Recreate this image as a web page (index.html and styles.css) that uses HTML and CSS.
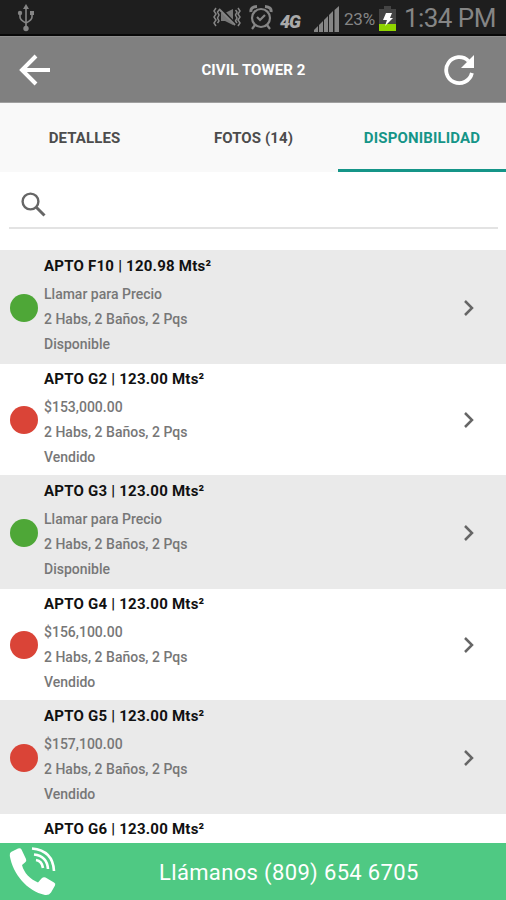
FILE: index.html
```html
<!DOCTYPE html>
<html lang="es">
<head>
<meta charset="utf-8">
<title>Civil Tower 2</title>
<link rel="stylesheet" href="styles.css">
</head>
<body>
<svg width="0" height="0" class="defs"><symbol id="chev" viewBox="0 0 12 18"><path d="M2 2l7 7-7 7" fill="none" stroke="#666" stroke-width="2.5"/></symbol></svg>
<div class="status">
  <svg class="usb" width="18" height="28" viewBox="0 0 18 28" fill="none" stroke="#858585" stroke-width="1.6"><path d="M9 4v20M3 10v3q0 3 6 6M15 10v3q0 3-6 6"/><path d="M9 0l3 5H6z" fill="#858585" stroke="none"/><circle cx="9" cy="24.5" r="2.7" fill="#858585" stroke="none"/><circle cx="3" cy="9" r="2.2" fill="#858585" stroke="none"/><path d="M13 7h4v4h-4z" fill="#858585" stroke="none"/></svg>
  <svg class="mute" width="28" height="20" viewBox="0 0 28 20" fill="none" stroke="#858585" stroke-width="1.5"><path d="M3 1L1 4l2 3-2 3 2 3-2 3 2 3M6 3L4.500 5l1.500 3-1.500 3 1.500 3-1.500 2M25 1l2 3-2 3 2 3-2 3 2 3-2 3M22.500 3l1.500 2-1.500 3 1.500 3-1.500 3 1.500 2"/><path d="M8 6h4l8-4v16l-8-4H8z" fill="#777" stroke="none"/><path d="M7 1l14 15" stroke="#1e1e1e" stroke-width="3"/><path d="M6 2l16 16" stroke-width="2"/></svg>
  <svg class="alarm" width="24" height="25" viewBox="0 0 24 25" fill="none" stroke="#858585" stroke-width="2.200"><circle cx="12" cy="13" r="9"/><path d="M8 12l3 3 5-5M6 20l-3 4M18 20l3 4"/><path d="M2 7q-1-5 6-5.500M22 7q1-5-6-5.500" stroke-width="3"/></svg>
  <span class="net">4G</span>
  <svg class="signal" width="26" height="26" viewBox="0 0 26 26" fill="#858585"><path d="M0 26v-2l4-4v6zM5 26v-7l4-4v11zM10 26V14l4-4v16zM15 26V9l4-4v21zM20.500 26V4l4.500-4v26z"/></svg>
  <span class="pct">23%</span>
  <svg class="batt" width="17" height="25" viewBox="0 0 17 25"><path d="M5 0h7v3h5v22H0V3h5z" fill="#444"/><path d="M0 18h17v7H0z" fill="#8fd400"/><path d="M7 7h6l-2 5h3l-8 8 2-6H4z" fill="#fff"/></svg>
  <span class="time">1:34 PM</span>
</div>
<header class="bar">
  <svg class="back" width="32" height="32" viewBox="0 0 32 32" fill="none" stroke="#fff" stroke-width="4"><path d="M31 16H4M17 2L3 16l14 14"/></svg>
  <h1>CIVIL TOWER 2</h1>
  <svg class="reload" width="32" height="32" viewBox="0 0 32 32"><path d="M28.900 19A13 13 0 1 1 25.500 7" fill="none" stroke="#fff" stroke-width="3.800"/><path d="M31 1v13H18z" fill="#fff"/></svg>
</header>
<nav class="tabs">
  <a class="tab">DETALLES</a><a class="tab">FOTOS (14)</a><a class="tab active">DISPONIBILIDAD</a>
</nav>
<div class="search"><svg width="26" height="26" viewBox="0 0 26 26" fill="none" stroke="#666"><circle cx="9.500" cy="9.500" r="7.900" stroke-width="2.400"/><path d="M15.500 15.500l8 8" stroke-width="3"/></svg></div>
<main class="list">
  <section class="row"><i class="dot"></i><div class="info"><h2>APTO F10 | 120.98 Mts²</h2><p>Llamar para Precio</p><p>2 Habs, 2 Baños, 2 Pqs</p><p>Disponible</p></div><svg class="chev"><use href="#chev"/></svg></section>
  <section class="row"><i class="dot sold"></i><div class="info"><h2>APTO G2 | 123.00 Mts²</h2><p>$153,000.00</p><p>2 Habs, 2 Baños, 2 Pqs</p><p>Vendido</p></div><svg class="chev"><use href="#chev"/></svg></section>
  <section class="row"><i class="dot"></i><div class="info"><h2>APTO G3 | 123.00 Mts²</h2><p>Llamar para Precio</p><p>2 Habs, 2 Baños, 2 Pqs</p><p>Disponible</p></div><svg class="chev"><use href="#chev"/></svg></section>
  <section class="row"><i class="dot sold"></i><div class="info"><h2>APTO G4 | 123.00 Mts²</h2><p>$156,100.00</p><p>2 Habs, 2 Baños, 2 Pqs</p><p>Vendido</p></div><svg class="chev"><use href="#chev"/></svg></section>
  <section class="row"><i class="dot sold"></i><div class="info"><h2>APTO G5 | 123.00 Mts²</h2><p>$157,100.00</p><p>2 Habs, 2 Baños, 2 Pqs</p><p>Vendido</p></div><svg class="chev"><use href="#chev"/></svg></section>
  <section class="row last"><div class="info"><h2>APTO G6 | 123.00 Mts²</h2></div></section>
</main>
<footer class="call">
  <svg class="phone" width="48" height="50" viewBox="0 0 48 50"><path d="M2 5L9 1.500q2.500-1 3.500 1l4.500 9.500q1 2-1 3.500l-3 2.500C15 26 21 32 29 35.500l3.500-4q2-2 4-1l8.500 5q2 1 1 3L42 45.500q-2 3-6 2.500C18 44 4 27 .8 9Q.5 6 2 5z" fill="#fff"/><g fill="none" stroke="#fff" stroke-width="2.600"><path d="M23 1.500q21 2 22 22.500M25 7.500q13 1.500 14 14.500M27 13q6 1 7 8"/></g></svg>
  <span>Llámanos (809) 654 6705</span>
</footer>
</body>
</html>
```
FILE: styles.css
```css
* { box-sizing: border-box; margin: 0; padding: 0; }
body { width: 506px; height: 900px; overflow: hidden; background: #fff; font-family: Roboto, sans-serif; display: flex; flex-direction: column; }
svg { display: block; flex: none; }
.defs { position: absolute; }
.status { height: 36px; flex: none; background: #1e1e1e; border-bottom: 2px solid #080808; display: flex; align-items: center; color: #858585; white-space: nowrap; }
.usb { margin: 2px 0 0 17px; }
.mute { margin-left: 178px; }
.alarm { margin-left: 8px; }
.net { width: 23px; margin: 8px 0 0 7px; font-size: 18px; font-weight: 900; font-style: italic; letter-spacing: -1px; color: #aaa; }
.signal { margin: 3px 0 0 11px; }
.pct { width: 34px; margin: 3px 0 0 4px; font-size: 17px; letter-spacing: -.2px; }
.batt { margin: 2px 0 0 1px; }
.time { margin: 1px 0 0 8px; font-size: 26px; letter-spacing: -.55px; }
.bar { height: 67px; flex: none; background: #808080; border-top: 1px solid #8e8e8e; border-bottom: 1px solid #a0a0a0; display: flex; align-items: center; padding: 1px 31px 0 19px; color: #fff; }
.bar h1 { flex: 1; text-align: center; font-size: 15px; font-weight: 700; padding-left: 13px; letter-spacing: .1px; }
.tabs { height: 69px; flex: none; background: #f9f9f9; display: grid; grid-template-columns: 169px 169px 168px; }
.tab { display: flex; align-items: center; justify-content: center; padding-top: 3px; font-size: 15px; font-weight: 700; letter-spacing: .1px; color: #4c4c4c; border-bottom: 3px solid transparent; }
.active { color: #159588; border-color: #159588; letter-spacing: .15px; }
.search { height: 57px; flex: none; margin: 0 8px 0 9px; border-bottom: 2px solid #e3e3e3; padding: 20px 0 0 12px; }
.list { margin-top: 21px; height: 593px; flex: none; overflow: hidden; }
.row { height: 111px; display: flex; align-items: center; padding: 0 32px 0 10px; }
.row:nth-child(odd) { height: 114px; background: #eaeaea; }
.dot { width: 28px; height: 28px; border-radius: 50%; background: #4ea737; margin-top: 1px; }
.sold { background: #da4437; }
.info { flex: 1; height: 100%; padding: 4px 0 0 6px; }
.row:nth-child(odd) .info { padding-top: 5px; }
h2 { font-size: 15px; line-height: 22px; font-weight: 700; color: #111; margin-bottom: 5px; letter-spacing: .23px; }
p { font-size: 14px; line-height: 25px; font-weight: 500; color: #777; letter-spacing: 0; }
.chev { width: 12px; height: 18px; margin: 1px -1px 0 0; }
.row.last .info { padding-left: 34px; }
.call { height: 57px; flex: none; background: #4fc983; display: flex; align-items: center; color: #fff; padding-left: 9px; }
.call span { margin: 1px 0 0 102px; font-size: 22px; letter-spacing: .35px; }
```
